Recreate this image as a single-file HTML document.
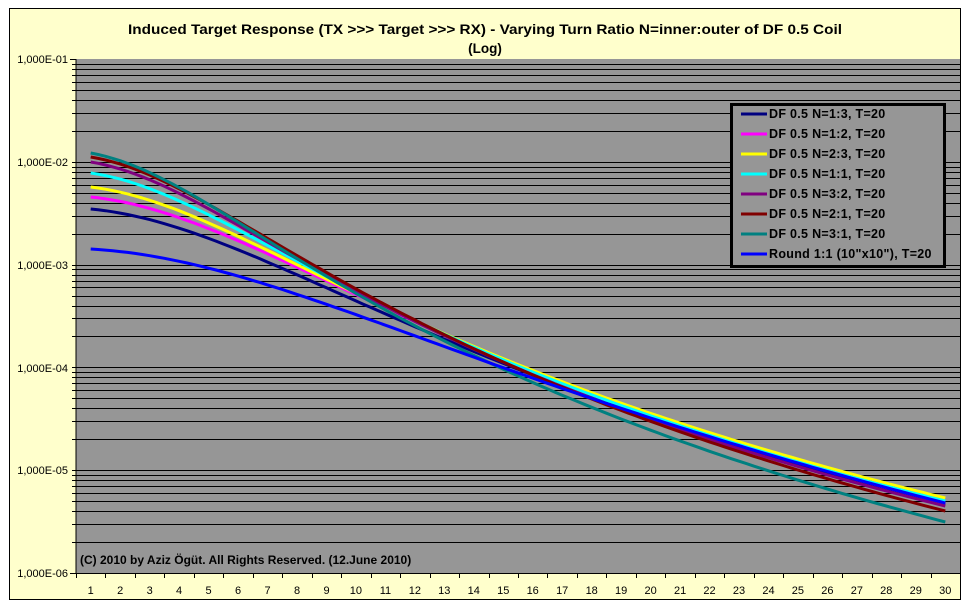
<!DOCTYPE html>
<html><head><meta charset="utf-8"><style>
html,body{margin:0;padding:0;background:#fff;}
svg{display:block;font-family:"Liberation Sans",Arial,sans-serif;}
</style></head><body>
<svg id="s" width="969" height="609" xmlns="http://www.w3.org/2000/svg">
<rect x="0" y="0" width="969" height="609" fill="#fff"/>
<rect x="9.5" y="8.5" width="951" height="591" fill="#FFFFCC" stroke="#000" stroke-width="1"/>
<rect x="76" y="59" width="884" height="514" fill="#969696"/>
<g id="grid" stroke="#000" stroke-width="1"></g>
<g id="curves" fill="none" stroke-width="3" stroke-linejoin="round"></g>
<line x1="76" y1="59" x2="76" y2="573" stroke="#000"/>
<line x1="76" y1="573.5" x2="960" y2="573.5" stroke="#000"/>
<g font-weight="bold" font-size="13.5" text-anchor="middle" fill="#000">
<text x="485" y="34" textLength="714" lengthAdjust="spacingAndGlyphs">Induced Target Response (TX &gt;&gt;&gt; Target &gt;&gt;&gt; RX) - Varying Turn Ratio N=inner:outer of DF 0.5 Coil</text>
<text x="485" y="53">(Log)</text>
</g>
<g font-size="11" text-anchor="end" fill="#000">
<text x="68" y="63">1,000E-01</text>
<text x="68" y="166">1,000E-02</text>
<text x="68" y="269">1,000E-03</text>
<text x="68" y="372">1,000E-04</text>
<text x="68" y="474">1,000E-05</text>
<text x="68" y="577">1,000E-06</text>
</g>
<g id="xl" font-size="11" text-anchor="middle" fill="#000">
<text x="90.7" y="594">1</text><text x="120.2" y="594">2</text><text x="149.7" y="594">3</text><text x="179.1" y="594">4</text><text x="208.6" y="594">5</text><text x="238.1" y="594">6</text><text x="267.5" y="594">7</text><text x="297" y="594">8</text><text x="326.5" y="594">9</text><text x="355.9" y="594">10</text><text x="385.4" y="594">11</text><text x="414.9" y="594">12</text><text x="444.3" y="594">13</text><text x="473.8" y="594">14</text><text x="503.3" y="594">15</text><text x="532.7" y="594">16</text><text x="562.2" y="594">17</text><text x="591.7" y="594">18</text><text x="621.1" y="594">19</text><text x="650.6" y="594">20</text><text x="680.1" y="594">21</text><text x="709.5" y="594">22</text><text x="739" y="594">23</text><text x="768.5" y="594">24</text><text x="797.9" y="594">25</text><text x="827.4" y="594">26</text><text x="856.9" y="594">27</text><text x="886.3" y="594">28</text><text x="915.8" y="594">29</text><text x="945.3" y="594">30</text>
</g>
<text x="80" y="564" font-size="12" font-weight="bold" fill="#000">(C) 2010 by Aziz Ögüt. All Rights Reserved. (12.June 2010)</text>
<rect x="731.5" y="104.5" width="213" height="162" fill="#969696" stroke="#000" stroke-width="3"/>
<g stroke-width="3">
<line x1="741" y1="114" x2="767" y2="114" stroke="#000080"/>
<line x1="741" y1="134" x2="767" y2="134" stroke="#FF00FF"/>
<line x1="741" y1="154" x2="767" y2="154" stroke="#FFFF00"/>
<line x1="741" y1="174" x2="767" y2="174" stroke="#00FFFF"/>
<line x1="741" y1="194" x2="767" y2="194" stroke="#800080"/>
<line x1="741" y1="214" x2="767" y2="214" stroke="#800000"/>
<line x1="741" y1="234" x2="767" y2="234" stroke="#008080"/>
<line x1="741" y1="254" x2="767" y2="254" stroke="#0000FF"/>
</g>
<g font-size="12.5" font-weight="bold" fill="#000" letter-spacing="0.3">
<text x="769" y="118">DF 0.5 N=1:3, T=20</text>
<text x="769" y="138">DF 0.5 N=1:2, T=20</text>
<text x="769" y="158">DF 0.5 N=2:3, T=20</text>
<text x="769" y="178">DF 0.5 N=1:1, T=20</text>
<text x="769" y="198">DF 0.5 N=3:2, T=20</text>
<text x="769" y="218">DF 0.5 N=2:1, T=20</text>
<text x="769" y="238">DF 0.5 N=3:1, T=20</text>
<text x="769" y="258">Round 1:1 (10"x10"), T=20</text>
</g>
</svg>
<script>
var NS="http://www.w3.org/2000/svg";
var g=document.getElementById('grid'),cv=document.getElementById('curves');
var top0=59,dec=102.8;
function ln(x1,y1,x2,y2,p){var l=document.createElementNS(NS,'line');l.setAttribute('x1',x1);l.setAttribute('y1',y1);l.setAttribute('x2',x2);l.setAttribute('y2',y2);(p||g).appendChild(l);}
for(var d=0;d<5;d++){for(var m=1;m<=10;m++){var y=Math.round(top0+dec*(d+1-Math.log10(m)))+0.5;if(m==10&&d>0)continue;if(y<top0+1||y>572)continue;ln(76,y,960,y);ln(72,y,76,y);}}
ln(70,573.5,76,573.5);ln(70,59.5,76,59.5);
var cw=884/30;for(var i=0;i<=30;i++){var x=Math.round(76+i*cw)+0.5;ln(x,573,x,578);}
function f(i,c){return Math.log10(1+(i/c)*(i/c));}
var S=[["#000080",209,310,504],["#FF00FF",197,304,503],["#FFFF00",187,303,498],["#00FFFF",173,302,501],["#800080",162,302,506],["#800000",157,300,511],["#008080",153,305,522],["#0000FF",249,322,503]];
S.forEach(function(s){var y1=s[1],ym=s[2],y30=s[3],r=(ym-y1)/(y30-y1),lo=0.3,hi=200;
for(var k=0;k<60;k++){var c=(lo+hi)/2;var rr=(f(10.7,c)-f(1,c))/(f(30,c)-f(1,c));if(rr>r)lo=c;else hi=c;}
var c=(lo+hi)/2,sc=(y30-y1)/(f(30,c)-f(1,c)),pts=[];
for(var t=1;t<=30;t+=0.25){pts.push((76+(t-0.5)*cw).toFixed(1)+","+(y1+sc*(f(t,c)-f(1,c))).toFixed(1));}
var p=document.createElementNS(NS,'polyline');p.setAttribute('points',pts.join(' '));p.setAttribute('stroke',s[0]);cv.appendChild(p);});
</script>
</body></html>
